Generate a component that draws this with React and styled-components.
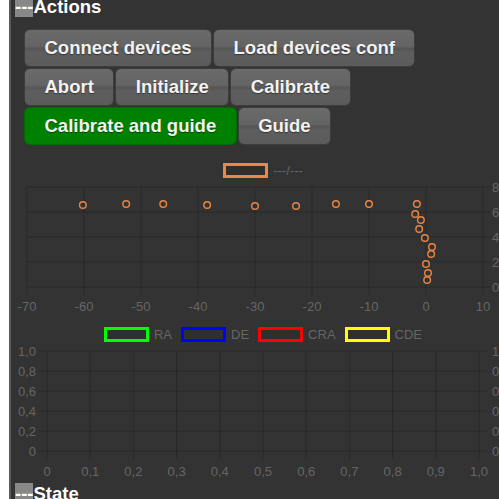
import React from "react";
import styled, { createGlobalStyle } from "styled-components";

const GlobalStyle = createGlobalStyle`
  html, body {
    margin: 0;
    padding: 0;
    background: #fff;
    overflow: hidden;
  }
  body {
    font-family: "Liberation Sans", Arial, sans-serif;
  }
`;

const Page = styled.div`
  padding-left: 9px;
  height: 499px;
  overflow: hidden;
  background: #fff;
`;

const Panel = styled.div`
  border-left: 2px solid #5a5a5a;
  background: #333;
  height: 100%;
  overflow: hidden;
`;

const SectionTitle = styled.div`
  margin-top: ${(p) => p.$offset || 0}px;
  padding-left: 4px;
  font-size: 18.5px;
  line-height: 21px;
  font-weight: bold;
  color: #fff;
  white-space: nowrap;

  span {
    background: #888;
  }
`;

const ButtonGrid = styled.div`
  display: flex;
  flex-wrap: wrap;
  gap: 1px;
  width: 470px;
  padding: 12px 0 0 13px;
`;

const Button = styled.button`
  height: 38px;
  padding: 0 19.5px;
  border: 1px solid ${(p) => (p.$active ? "#006a00" : "#3d3d3d")};
  border-radius: 6px;
  background: ${(p) =>
    p.$active
      ? "#008000"
      : "linear-gradient(to bottom, #6a6a6a 0%, #646464 45%, #555 52%, #5e5e5e 62%, #5b5b5b 100%)"};
  color: #f2f2f2;
  font-family: "Liberation Sans", Arial, sans-serif;
  font-size: 18.5px;
  font-weight: bold;
  text-shadow: 0 1px 1px rgba(0, 0, 0, 0.45);
  cursor: pointer;
  white-space: nowrap;
`;

const ChartBlock = styled.div`
  width: 504px;
`;

const Legend = styled.div`
  display: flex;
  justify-content: center;
  align-items: center;
  gap: 9px;
  height: 15px;
  margin-top: ${(p) => p.$top}px;
`;

const LegendItem = styled.div`
  display: flex;
  align-items: center;
  gap: 5px;
  font-size: 13px;
  color: #666;
`;

const Swatch = styled.span`
  box-sizing: border-box;
  width: 45px;
  height: 15px;
  border: 3px solid ${(p) => p.$color};
  background: rgba(0, 0, 0, 0.08);
`;

const Plot = styled.svg`
  display: block;
  overflow: hidden;
`;

const GRID = "rgba(0,0,0,0.2)";
const TICK = "#666";
const ORANGE = "#ec8744";

const points = [
  [-60.2, 6.56], [-52.6, 6.64], [-46.1, 6.64], [-38.4, 6.56], [-30, 6.48],
  [-22.8, 6.48], [-15.8, 6.64], [-10, 6.64], [-1.6, 6.64], [-1.9, 5.84],
  [-0.9, 5.36], [-1.2, 4.64], [-0.2, 3.92], [1.05, 3.2], [0.9, 2.64],
  [0, 1.84], [0.35, 1.12], [0.2, 0.56],
];

function ScatterChart() {
  const sx = (v) => 27 + (v + 70) * 5.7;
  const sy = (v) => 287 - v * 12.5;
  const xs = [-70, -60, -50, -40, -30, -20, -10, 0, 10];
  const ys = [0, 2, 4, 6, 8];
  return (
    <Plot width="504" height="146" viewBox="11 178 504 146">
      {xs.map((v) => (
        <line key={"v" + v} x1={sx(v)} x2={sx(v)} y1={187} y2={295} stroke={GRID} />
      ))}
      {ys.map((v) => (
        <line key={"h" + v} x1={27} x2={491} y1={sy(v)} y2={sy(v)} stroke={GRID} />
      ))}
      {xs.map((v) => (
        <text key={"tx" + v} x={sx(v)} y={310.5} fill={TICK} fontSize="13" textAnchor="middle" fontFamily="Liberation Sans, Arial, sans-serif">
          {v}
        </text>
      ))}
      {ys.map((v) => (
        <text key={"ty" + v} x={492} y={sy(v) + 4.5} fill={TICK} fontSize="13" fontFamily="Liberation Sans, Arial, sans-serif">
          {v}
        </text>
      ))}
      {points.map(([x, y], i) => (
        <circle key={i} cx={sx(x)} cy={sy(y)} r="3.3" fill="none" stroke={ORANGE} strokeWidth="1.4" />
      ))}
    </Plot>
  );
}

function LineChart() {
  const sx = (v) => 47 + v * 432;
  const sy = (v) => 451 - v * 100;
  const steps = [0, 0.1, 0.2, 0.3, 0.4, 0.5, 0.6, 0.7, 0.8, 0.9, 1];
  const ysteps = [0, 0.2, 0.4, 0.6, 0.8, 1];
  const fmt = (v) => (v === 0 ? "0" : v.toFixed(1).replace(".", ","));
  return (
    <Plot width="504" height="141" viewBox="11 342 504 141">
      {steps.map((v) => (
        <line key={"v" + v} x1={sx(v)} x2={sx(v)} y1={351} y2={459} stroke={GRID} />
      ))}
      {ysteps.map((v) => (
        <line key={"h" + v} x1={39} x2={487} y1={sy(v)} y2={sy(v)} stroke={GRID} />
      ))}
      {steps.map((v) => (
        <text key={"tx" + v} x={sx(v)} y={475.5} fill={TICK} fontSize="13" textAnchor="middle" fontFamily="Liberation Sans, Arial, sans-serif">
          {fmt(v)}
        </text>
      ))}
      {ysteps.map((v) => (
        <text key={"tl" + v} x={36} y={sy(v) + 4.5} fill={TICK} fontSize="13" textAnchor="end" fontFamily="Liberation Sans, Arial, sans-serif">
          {fmt(v)}
        </text>
      ))}
      {ysteps.map((v) => (
        <text key={"tr" + v} x={492} y={sy(v) + 4.5} fill={TICK} fontSize="13" fontFamily="Liberation Sans, Arial, sans-serif">
          {fmt(v)}
        </text>
      ))}
    </Plot>
  );
}

const guideSeries = [
  { label: "RA", color: "#00ff00" },
  { label: "DE", color: "#0000ff" },
  { label: "CRA", color: "#ff0000" },
  { label: "CDE", color: "#ffff00" },
];

export default function App() {
  return (
    <Page>
      <GlobalStyle />
      <Panel>
        <SectionTitle $offset={-4}>
          <span>---</span>Actions
        </SectionTitle>
        <ButtonGrid>
          <Button>Connect devices</Button>
          <Button>Load devices conf</Button>
          <Button>Abort</Button>
          <Button>Initialize</Button>
          <Button>Calibrate</Button>
          <Button $active>Calibrate and guide</Button>
          <Button>Guide</Button>
        </ButtonGrid>
        <ChartBlock>
          <Legend $top={18}>
            <LegendItem>
              <Swatch $color={ORANGE} />
              ---/---
            </LegendItem>
          </Legend>
          <ScatterChart />
          <Legend $top={3}>
            {guideSeries.map((s) => (
              <LegendItem key={s.label}>
                <Swatch $color={s.color} />
                {s.label}
              </LegendItem>
            ))}
          </Legend>
          <LineChart />
        </ChartBlock>
        <SectionTitle>
          <span>---</span>State
        </SectionTitle>
      </Panel>
    </Page>
  );
}
